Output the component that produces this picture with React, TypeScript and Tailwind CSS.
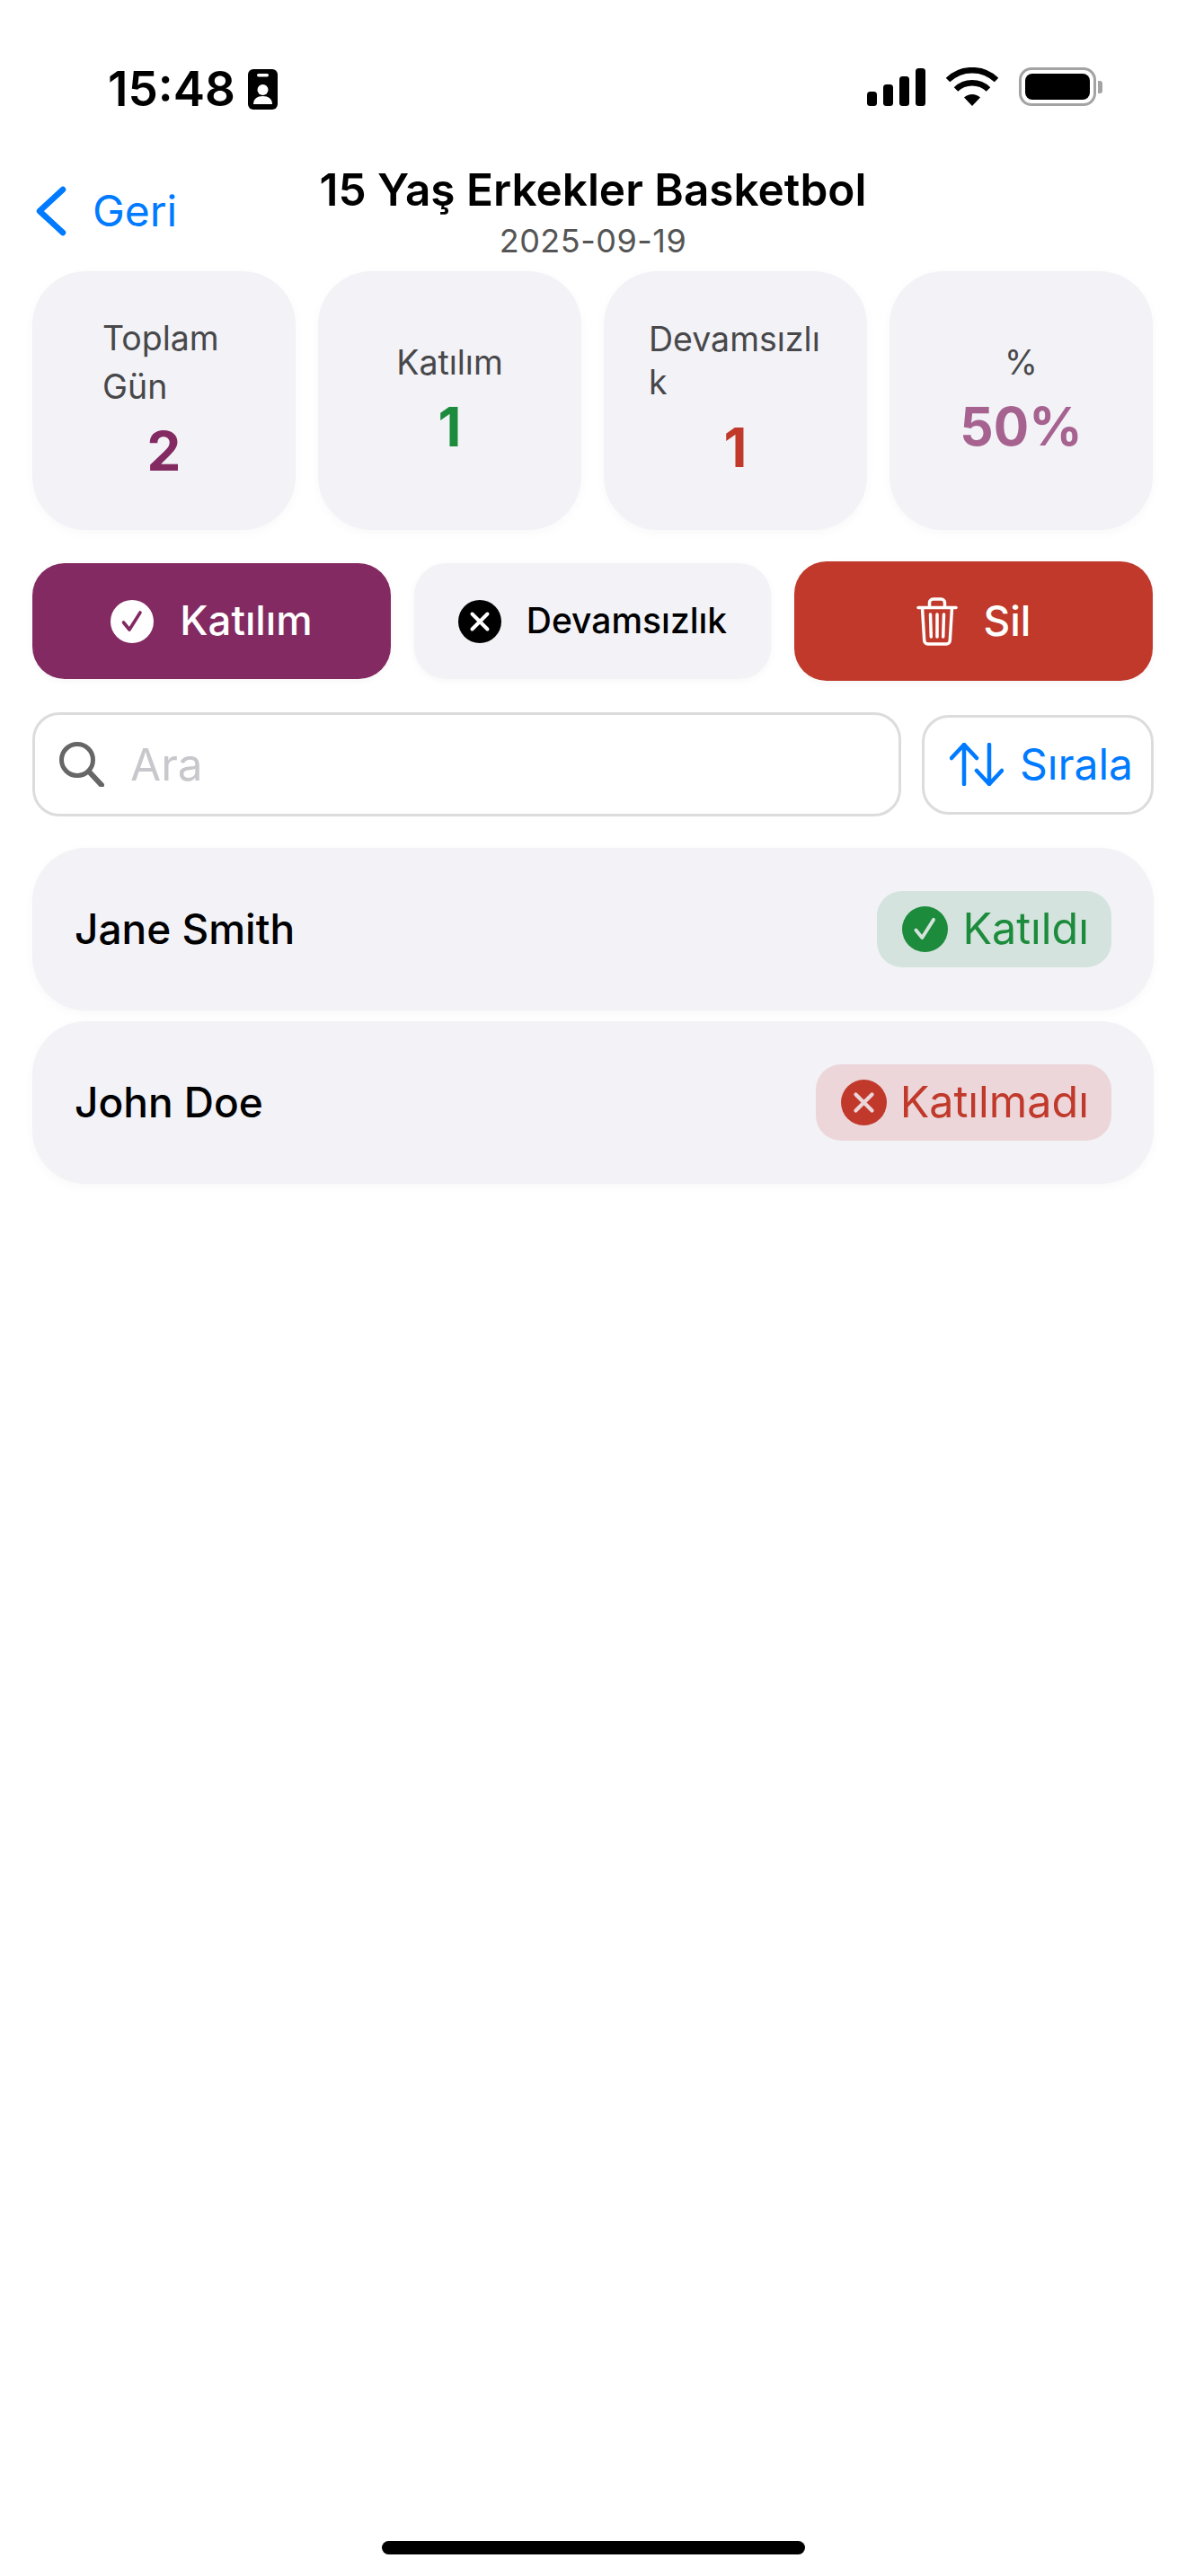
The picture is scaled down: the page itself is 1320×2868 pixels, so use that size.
import React from 'react';

const Check = ({ size, bg, fg }: { size: number; bg: string; fg: string }) => (
  <svg width={size} height={size} viewBox="0 0 48 48" className="shrink-0">
    <circle cx="24" cy="24" r="24" fill={bg} />
    <path d="M14.5 25l6.5 8 12-19" fill="none" stroke={fg} strokeWidth="3.6" strokeLinecap="round" strokeLinejoin="round" />
  </svg>
);

const Cross = ({ size, bg, fg }: { size: number; bg: string; fg: string }) => (
  <svg width={size} height={size} viewBox="0 0 48 48" className="shrink-0">
    <circle cx="24" cy="24" r="24" fill={bg} />
    <path d="M15.5 15.5l17 17M32.5 15.5l-17 17" fill="none" stroke={fg} strokeWidth="4" strokeLinecap="round" />
  </svg>
);

const Trash = () => (
  <svg width="46" height="54" viewBox="0 0 46 54" fill="none" stroke="#fff" strokeWidth="3.5" strokeLinecap="round" strokeLinejoin="round" className="shrink-0">
    <path d="M2 11.5h42" />
    <path d="M14.5 11V6a4 4 0 0 1 4-4h9a4 4 0 0 1 4 4v5" />
    <path d="M6.5 12l2.2 36a4 4 0 0 0 4 4h20.6a4 4 0 0 0 4-4l2.2-36" />
    <path d="M15.5 19l.8 25M23 19v25M30.5 19l-.8 25" />
  </svg>
);

const Stat = ({ label, value, color, labelClass }: { label: string; value: string; color: string; labelClass: string }) => (
  <div className="flex h-[288px] w-[293px] flex-col items-center justify-center rounded-[60px] bg-[#f2f2f7] pb-[4px] shadow-[0_3px_12px_rgba(0,0,0,0.03)]">
    <div className={`text-[37.5px] text-[#48484a] ${labelClass}`}>{label}</div>
    <div className={`font-bold leading-[72px] ${color}`}>{value}</div>
  </div>
);

const Person = ({ name, children }: { name: string; children: React.ReactNode }) => (
  <div className="flex h-[181px] items-center justify-between rounded-[60px] bg-[#f2f2f7] pl-[47px] pr-[47px] shadow-[0_3px_12px_rgba(0,0,0,0.03)]">
    <span className="text-[46px] font-medium text-black">{name}</span>
    {children}
  </div>
);

export default function App() {
  return (
    <div className="flex min-h-[2868px] w-[1320px] flex-col bg-white font-['Inter',sans-serif]">
      {/* status bar */}
      <div className="flex h-[180px] items-start justify-between pl-[120px] pr-[93px] pt-[75px]">
        <div className="flex items-center gap-[14px]">
          <span className="text-[53px] font-semibold leading-[48px] text-black">15:48</span>
          <svg width="33" height="45" viewBox="0 0 33 45">
            <rect width="33" height="45" rx="6" />
            <rect x="10" y="5" width="13" height="3.5" rx="1.7" fill="#fff" />
            <circle cx="16.5" cy="23" r="6" fill="#fff" />
            <path d="M6 39c0-6 4.500-9 10.500-9s10.500 3 10.500 9z" fill="#fff" />
          </svg>
        </div>
        <div className="flex items-center">
          <svg width="66" height="42" viewBox="0 0 66 42">
            <rect x="0" y="26" width="11" height="16" rx="3.500" />
            <rect x="18" y="18" width="11" height="24" rx="3.500" />
            <rect x="36" y="9" width="11" height="33" rx="3.500" />
            <rect x="54" y="0" width="11" height="42" rx="3.500" />
          </svg>
          <svg width="60" height="43" viewBox="0 0 60 43" className="ml-[21px]">
            <path d="M30 43L21 33.500a13 13 0 0 1 18 0z" />
            <path d="M12 24.500a26 26 0 0 1 36 0" fill="none" stroke="#000" strokeWidth="6.500" />
            <path d="M3 14a39 39 0 0 1 54 0" fill="none" stroke="#000" strokeWidth="6.500" />
          </svg>
          <div className="ml-[22px] flex items-center">
            <div className="flex h-[43px] w-[86px] items-center justify-center rounded-[14px] border-[3px] border-[#a3a3a3] p-[4px]">
              <div className="h-full w-full rounded-[8px] bg-black" />
            </div>
            <div className="ml-[2px] h-[14px] w-[5px] rounded-r-[3px] bg-[#a3a3a3]" />
          </div>
        </div>
      </div>

      {/* nav */}
      <div className="grid h-[122px] grid-cols-[1fr_auto_1fr] px-[36px]">
        <div className="flex items-start pl-[4px] pt-[27px]">
          <svg width="34" height="56" viewBox="0 0 34 56" fill="none" stroke="#007aff" strokeWidth="6.500" strokeLinecap="round" strokeLinejoin="round">
            <path d="M30 4L4 28l26 24" />
          </svg>
          <span className="ml-[29px] mt-[-1px] text-[48px] leading-[58px] text-[#007aff]">Geri</span>
        </div>
        <div className="flex flex-col items-center">
          <div className="text-[49.5px] font-semibold leading-[62px] text-black">15 Yaş Erkekler Basketbol</div>
          <div className="mt-[4px] text-[36px] leading-[44px] tracking-[0.5px] text-[#555]">2025-09-19</div>
        </div>
        <div />
      </div>

      <div className="flex flex-col px-[36px]">
        {/* stats */}
        <div className="flex gap-[25px]">
          <Stat label="Toplam Gün" value="2" color="mt-[8px] text-[60px] text-[#832a62]" labelClass="w-[137px] leading-[54px]" />
          <Stat label="Katılım" value="1" color="mt-[8px] text-[60px] text-[#1c8b3c]" labelClass="text-center leading-[54px]" />
          <Stat label="Devamsızlık" value="1" color="mt-[12px] text-[60px] text-[#c0392b]" labelClass="w-[193px] break-all leading-[48px]" />
          <Stat label="%" value="50%" color="mt-[8px] text-[58.5px] text-[#a66390]" labelClass="text-center leading-[54px]" />
        </div>

        {/* actions */}
        <div className="mt-[37px] flex h-[129px] items-center gap-[26px]">
          <div className="flex h-[129px] w-[399px] items-center justify-center gap-[29px] rounded-[36px] bg-[#832a62] shadow-[0_2px_8px_rgba(0,0,0,0.04)]">
            <Check size={48} bg="#fff" fg="#832a62" />
            <span className="text-[45.5px] font-medium text-white">Katılım</span>
          </div>
          <div className="flex h-[129px] w-[397px] items-center justify-center gap-[28px] rounded-[36px] bg-[#f2f2f7] shadow-[0_2px_8px_rgba(0,0,0,0.04)]">
            <Cross size={48} bg="#000" fg="#fff" />
            <span className="text-[39px] font-medium text-black">Devamsızlık</span>
          </div>
          <div className="flex h-[133px] w-[399px] items-center justify-center gap-[29px] rounded-[36px] bg-[#c0392b] shadow-[0_2px_8px_rgba(0,0,0,0.04)]">
            <Trash />
            <span className="text-[46px] font-medium text-white">Sil</span>
          </div>
        </div>

        {/* search + sort */}
        <div className="mt-[37px] flex h-[116px] items-center gap-[23px]">
          <div className="flex h-[116px] w-[967px] items-center rounded-[30px] border-[3px] border-[#dcdcdc] pl-[27px]">
            <svg width="50" height="50" viewBox="0 0 50 50" fill="none" stroke="#666" strokeWidth="5" strokeLinecap="round">
              <circle cx="20" cy="20" r="17.500" />
              <path d="M33 33l14 15" strokeWidth="6" />
            </svg>
            <span className="ml-[29px] text-[49.5px] text-[#c7c7cc]">Ara</span>
          </div>
          <div className="flex h-[111px] w-[258px] items-center rounded-[30px] border-[3px] border-[#dcdcdc] pl-[28px]">
            <svg width="60" height="48" viewBox="0 0 60 48" fill="none" stroke="#007aff" strokeWidth="4.500" strokeLinecap="round" strokeLinejoin="round" className="shrink-0">
              <path d="M16 46V2M2 17L16 2l14 15" />
              <path d="M44 2v44M30 31l14 15 14-15" />
            </svg>
            <span className="ml-[18px] text-[48px] text-[#007aff]">Sırala</span>
          </div>
        </div>

        {/* attendance list */}
        <div className="mt-[35px] flex flex-col gap-[12px]">
          <Person name="Jane Smith">
            <div className="flex h-[85px] items-center gap-[16px] rounded-[28px] bg-[#d4e3dd] pl-[28px] pr-[25px]">
              <Check size={51} bg="#1c8b3c" fg="#d4e3dd" />
              <span className="text-[48.5px] text-[#1c8b3c]">Katıldı</span>
            </div>
          </Person>
          <Person name="John Doe">
            <div className="flex h-[85px] items-center gap-[15px] rounded-[28px] bg-[#ecd6da] pl-[28px] pr-[25px]">
              <Cross size={51} bg="#c0392b" fg="#ecd6da" />
              <span className="text-[48.5px] text-[#c0392b]">Katılmadı</span>
            </div>
          </Person>
        </div>
      </div>

      {/* home indicator */}
      <div className="mx-auto mb-[24px] mt-auto h-[15px] w-[471px] rounded-full bg-black" />
    </div>
  );
}
